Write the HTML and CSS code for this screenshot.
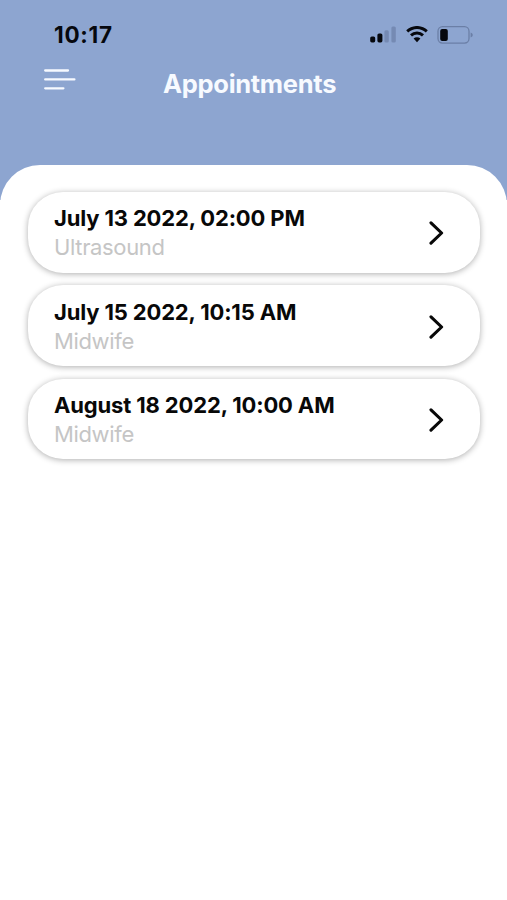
FILE: index.html
```html
<!DOCTYPE html>
<html lang="en">
<head>
    <meta charset="UTF-8">
    <title>Appointments</title>
    <link rel="stylesheet" href="styles.css">
</head>
<body>
    <div class="status-bar">
        <span class="time">10:17</span>
        <div class="status-icons">
            <svg class="signal" width="26" height="18" viewBox="0 0 26 18">
                <rect x="0.2" y="10.4" width="5" height="6" rx="1.6"/>
                <rect x="7.4" y="7.4" width="5" height="9" rx="1.6"/>
                <rect class="dim" x="14.4" y="4.2" width="4.4" height="12.2" rx="1.5"/>
                <rect class="dim" x="21.4" y="0.6" width="4.4" height="15.8" rx="1.5"/>
            </svg>
            <svg class="wifi" width="22" height="17" viewBox="0 0 22 17">
                <path d="M1.2 5.4C6.8 .1 15.2 .1 20.8 5.4"/>
                <path d="M5 9.4C8.4 6.1 13.6 6.1 17 9.4"/>
                <path class="dot" d="M7.6 12.6C9.5 10.9 12.5 10.9 14.4 12.6L11 16.2Z"/>
            </svg>
            <svg class="battery" width="36" height="18" viewBox="0 0 36 18">
                <rect class="shell" x="1" y="0.7" width="31" height="16.4" rx="4.5"/>
                <rect x="3.2" y="2.9" width="7.6" height="12" rx="2"/>
                <path class="cap" d="M33.6 6.4Q35.8 7.3 35.8 9T33.6 11.6Z"/>
            </svg>
        </div>
    </div>
    <header class="header">
        <svg class="menu" width="33" height="24" viewBox="0 0 33 24">
            <path d="M1.2 2.5H24M1.2 11.4H30.4M1.2 20.3H19.4"/>
        </svg>
        <h1>Appointments</h1>
    </header>
    <main class="sheet">
        <div class="card">
            <div class="info">
                <p class="date">July 13 2022, 02:00 PM</p>
                <p class="type">Ultrasound</p>
            </div>
            <svg class="chevron" width="16" height="26" viewBox="0 0 16 26"><path d="M2 2.8L12.6 13L2 23.2"/></svg>
        </div>
        <div class="card">
            <div class="info">
                <p class="date">July 15 2022, 10:15 AM</p>
                <p class="type">Midwife</p>
            </div>
            <svg class="chevron" width="16" height="26" viewBox="0 0 16 26"><path d="M2 2.8L12.6 13L2 23.2"/></svg>
        </div>
        <div class="card">
            <div class="info">
                <p class="date">August 18 2022, 10:00 AM</p>
                <p class="type">Midwife</p>
            </div>
            <svg class="chevron" width="16" height="26" viewBox="0 0 16 26"><path d="M2 2.8L12.6 13L2 23.2"/></svg>
        </div>
    </main>
</body>
</html>
```

FILE: styles.css
```css
* {
    box-sizing: border-box;
}
body {
    margin: 0;
    height: 900px;
    display: flex;
    flex-direction: column;
    overflow: hidden;
    background: linear-gradient(#8da5d0 0 200px, #fff 200px);
    font-family: Inter, "Liberation Sans", sans-serif;
}
h1, p {
    margin: 0;
}
.status-bar {
    height: 64px;
    padding: 5px 34px 0 54px;
    display: flex;
    align-items: center;
    justify-content: space-between;
}
.time {
    font-size: 22.5px;
    font-weight: 700;
    line-height: 26px;
    letter-spacing: 0.7px;
    color: #06080e;
}
.status-icons {
    display: flex;
    align-items: center;
    gap: 9.5px;
    fill: #06080e;
}
.dim {
    fill: #758ab3;
}
.wifi path {
    fill: none;
    stroke: #06080e;
    stroke-width: 2.9;
}
.wifi .dot {
    fill: #06080e;
    stroke: none;
}
.battery .shell {
    fill: none;
    stroke: #6b7fa6;
    stroke-width: 1.3;
}
.battery .cap {
    fill: #6b7fa6;
}
.header {
    height: 101px;
    padding: 4px 44px 0;
    display: grid;
    grid-template-columns: 119px 1fr;
    align-items: start;
}
.menu {
    fill: none;
    stroke: #f7faff;
    stroke-width: 2.3;
    stroke-linecap: round;
}
h1 {
    font-size: 25.5px;
    font-weight: 700;
    line-height: 32px;
    letter-spacing: -0.3px;
    white-space: nowrap;
    color: #f7faff;
}
.sheet {
    flex: 1;
    padding: 27px 27px 0 28px;
    display: flex;
    flex-direction: column;
    gap: 12.7px;
    border-radius: 40px 40px 0 0;
    background: #fff;
}
.card {
    height: 80.7px;
    padding: 2px 35px 0 26px;
    display: flex;
    align-items: center;
    justify-content: space-between;
    border-radius: 35px;
    background: #fff;
    box-shadow: 0 1px 6px rgba(0, 0, 0, 0.32);
}
.date, .type {
    font-size: 22px;
    line-height: 29px;
    white-space: nowrap;
}
.date {
    font-weight: 700;
    letter-spacing: -0.15px;
    color: #080808;
}
.type {
    letter-spacing: -0.35px;
    color: #c5c5c5;
}
.chevron {
    fill: none;
    stroke: #080808;
    stroke-width: 3.1;
    stroke-linecap: round;
    stroke-linejoin: round;
}
```
